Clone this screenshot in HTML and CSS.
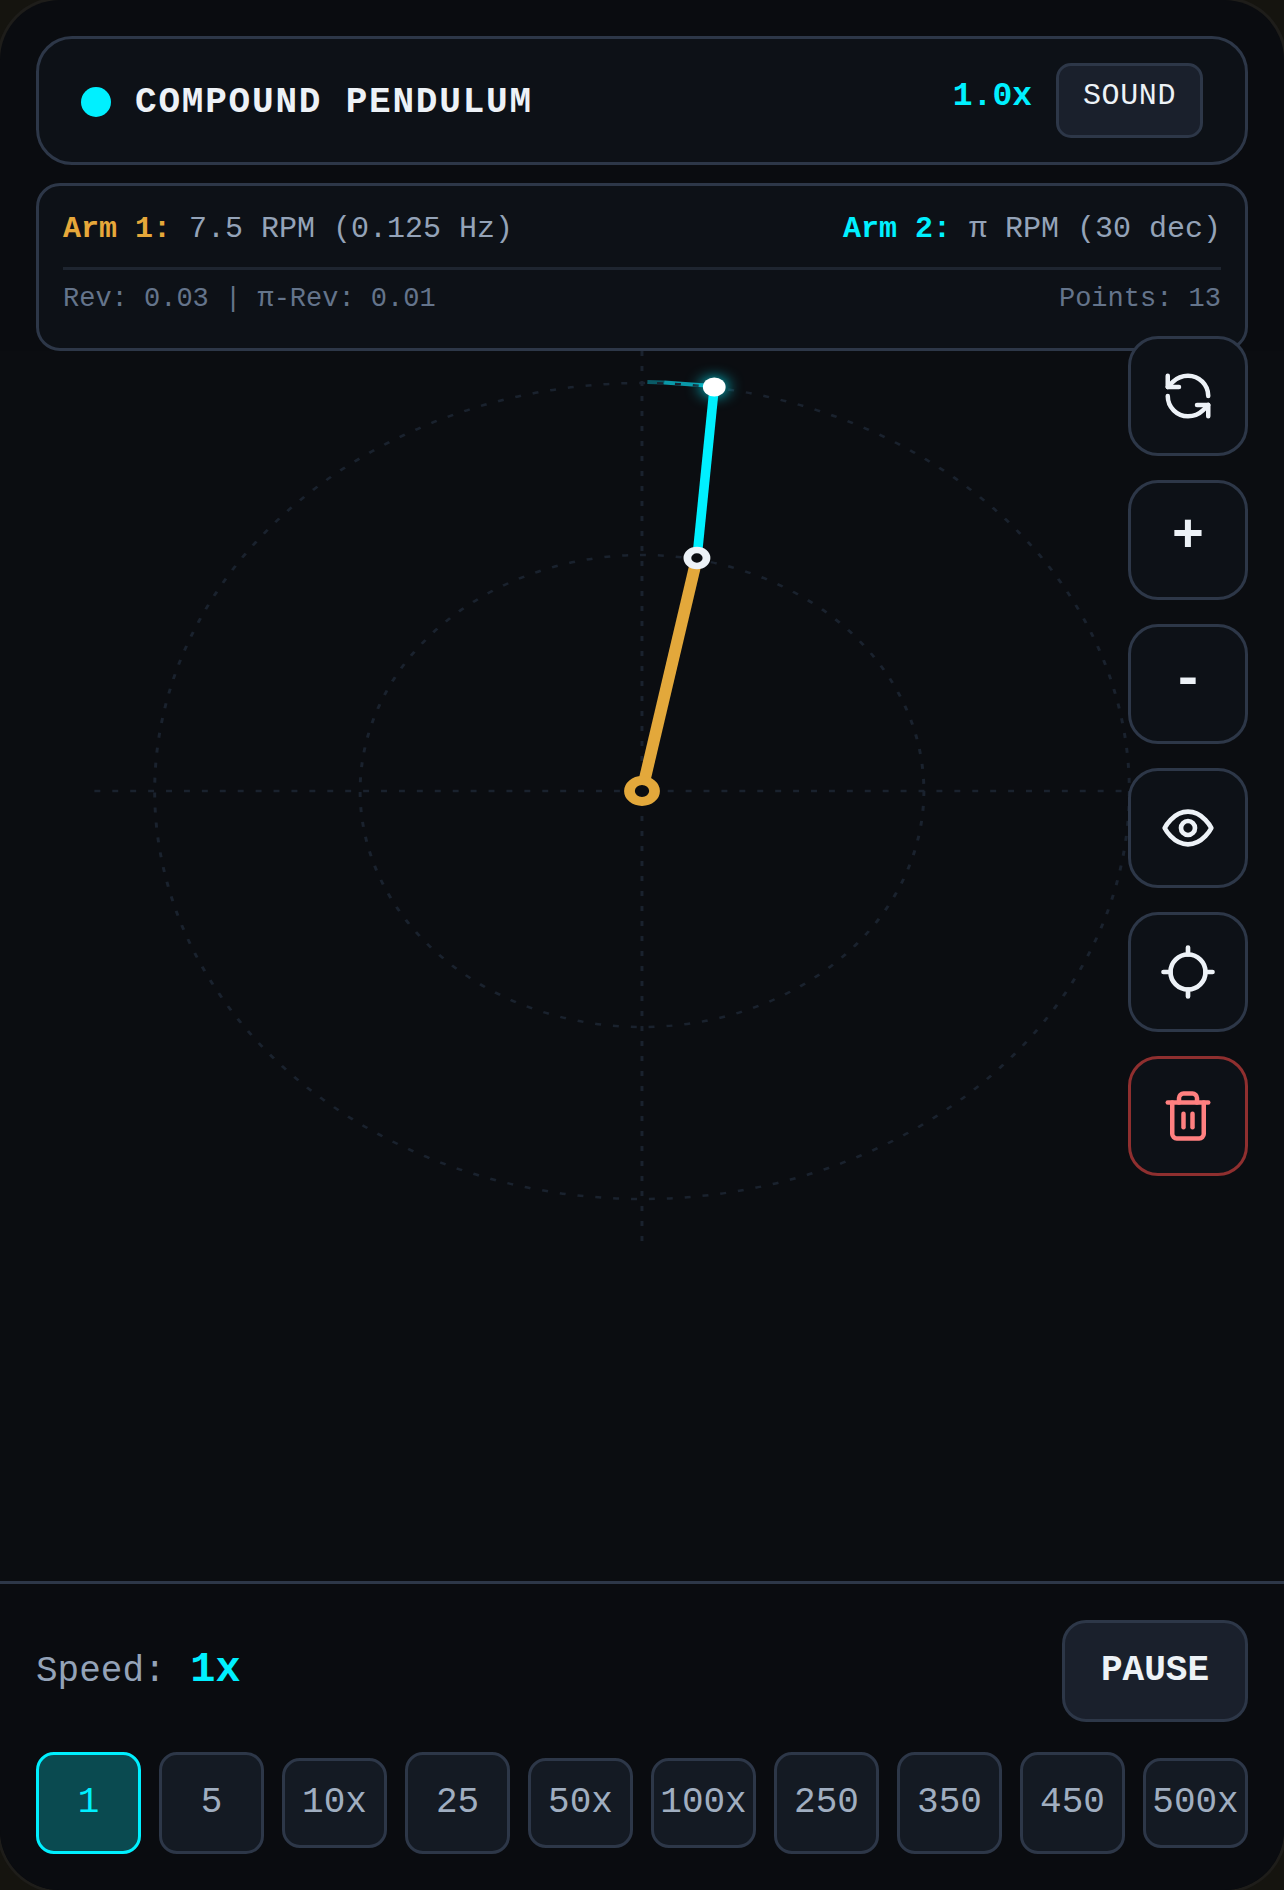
FILE: index.html
```html
<!DOCTYPE html>
<html lang="en">
<head>
  <meta charset="UTF-8" />
  <meta name="viewport" content="width=device-width, initial-scale=1.0"/>
  <title>Compound Pendulum</title>
  <link rel="stylesheet" href="styles.css">
</head>
<body>
  <div class="frame">
    <header class="top-card">
      <div class="title-wrap">
        <span class="dot"></span>
        <h1>COMPOUND PENDULUM</h1>
      </div>
      <div class="top-right">
        <span class="zoom-val">1.0x</span>
        <button class="sound-btn">SOUND</button>
      </div>
    </header>

    <section class="info-card">
      <div class="info-row">
        <span><b class="arm1">Arm 1:</b> 7.5 RPM (0.125 Hz)</span>
        <span><b class="arm2">Arm 2:</b> π RPM (30 dec)</span>
      </div>
      <div class="info-sub">
        <span>Rev: 0.03 | π-Rev: 0.01</span>
        <span>Points: 13</span>
      </div>
    </section>

    <main class="stage">
      <svg class="canvas" viewBox="0 0 1075 1230" preserveAspectRatio="none">
        <path class="trail-old" d="M542 31 L556 31.5"/>
        <path class="trail" d="M556 31.5 L597 35"/>
        <circle class="grid" cx="537.5" cy="440" r="408"/>
        <circle class="grid" cx="537.5" cy="440" r="236"/>
        <line class="grid" x1="79" y1="440" x2="996" y2="440"/>
        <line class="grid" x1="537.5" y1="0" x2="537.5" y2="891"/>
        <line class="arm-gold" x1="537.5" y1="440" x2="583.5" y2="207"/>
        <line class="arm-cyan" x1="583.5" y1="207" x2="598" y2="36"/>
        <circle class="pivot" cx="537.5" cy="440" r="10.5"/>
        <circle class="joint" cx="583.5" cy="207" r="8"/>
        <circle class="tip" cx="598" cy="36" r="9.5"/>
      </svg>
    </main>

    <div class="tools">
      <button class="tool-btn">
        <svg width="54" height="54" viewBox="0 0 24 24"><path d="M21 12a9 9 0 0 0-9-9 9.75 9.75 0 0 0-6.74 2.74L3 8"/><path d="M3 3v5h5"/><path d="M3 12a9 9 0 0 0 9 9 9.75 9.75 0 0 0 6.74-2.74L21 16"/><path d="M16 16h5v5"/></svg>
      </button>
      <button class="tool-btn sign">+</button>
      <button class="tool-btn sign">-</button>
      <button class="tool-btn">
        <svg width="56" height="56" viewBox="0 0 24 24"><path d="M2 12s3.5-7 10-7 10 7 10 7-3.5 7-10 7-10-7-10-7Z"/><circle cx="12" cy="12" r="3"/></svg>
      </button>
      <button class="tool-btn">
        <svg width="56" height="56" viewBox="0 0 24 24"><circle cx="12" cy="12" r="7.5"/><path d="M12 1.5v3M12 19.5v3M1.5 12h3M19.5 12h3"/></svg>
      </button>
      <button class="tool-btn danger">
        <svg width="54" height="54" viewBox="0 0 24 24"><path d="M3 6h18"/><path d="M19 6v14c0 1-1 2-2 2H7c-1 0-2-1-2-2V6"/><path d="M8 6V4c0-1 1-2 2-2h4c1 0 2 1 2 2v2"/><line x1="10" y1="11" x2="10" y2="17"/><line x1="14" y1="11" x2="14" y2="17"/></svg>
      </button>
    </div>

    <footer class="controls">
      <div class="speed-row">
        <div class="speed-label">Speed: <b>1x</b></div>
        <button class="pause-btn">PAUSE</button>
      </div>
      <div class="speed-grid">
        <button class="speed-btn tall active">1</button>
        <button class="speed-btn tall">5</button>
        <button class="speed-btn">10x</button>
        <button class="speed-btn tall">25</button>
        <button class="speed-btn">50x</button>
        <button class="speed-btn">100x</button>
        <button class="speed-btn tall">250</button>
        <button class="speed-btn tall">350</button>
        <button class="speed-btn tall">450</button>
        <button class="speed-btn">500x</button>
      </div>
    </footer>
  </div>
</body>
</html>
```

FILE: styles.css
```css
* {
  box-sizing: border-box;
}

html, body {
  margin: 0;
  height: 100%;
  overflow: hidden;
  background-color: #15140f;
}

body {
  font-family: "Liberation Mono", monospace;
  color: #edf2f7;
}

button {
  font-family: inherit;
  padding: 0;
}

.frame {
  position: relative;
  width: 1284px;
  height: 1890px;
  display: flex;
  flex-direction: column;
  padding-top: 36px;
  background-color: #0a0c10;
  border-radius: 60px;
  box-shadow: 0 0 0 3px #1e1d1a;
  overflow: hidden;
}

.top-card {
  height: 129px;
  margin: 0 36px;
  padding: 0 42px;
  display: flex;
  align-items: center;
  justify-content: space-between;
  background-color: #0d1117;
  border: 3px solid #2d3748;
  border-radius: 36px;
}

.title-wrap {
  display: flex;
  align-items: center;
  gap: 24px;
}

.dot {
  width: 30px;
  height: 30px;
  margin-top: 3px;
  border-radius: 50%;
  background-color: #00f0ff;
}

h1 {
  margin: 0;
  padding-top: 3px;
  font-size: 36px;
  font-weight: bold;
  letter-spacing: 1.8px;
  color: #edf2f7;
}

.top-right {
  display: flex;
  align-items: center;
  gap: 24px;
}

.zoom-val {
  margin-bottom: 9px;
  font-size: 33px;
  font-weight: bold;
  color: #00f0ff;
}

.sound-btn {
  width: 147px;
  height: 75px;
  padding-bottom: 9px;
  font-size: 30px;
  letter-spacing: 0.6px;
  color: #edf2f7;
  background-color: #1a202c;
  border: 3px solid #2d3748;
  border-radius: 15px;
}

.info-card {
  height: 168px;
  margin: 18px 36px 0;
  padding: 0 24px;
  background-color: #0d1117;
  border: 3px solid #2d3748;
  border-radius: 24px;
}

.info-row {
  height: 84px;
  padding-top: 26px;
  display: flex;
  justify-content: space-between;
  font-size: 30px;
  color: #94a3b8;
  border-bottom: 3px solid #1e2530;
}

.info-row b {
  font-weight: bold;
}

.arm1 {
  color: #e6a83a;
}

.arm2 {
  color: #00f0ff;
}

.info-sub {
  padding-top: 14px;
  display: flex;
  justify-content: space-between;
  font-size: 27px;
  color: #64748b;
}

.stage {
  position: relative;
  flex: 1;
  background-color: #0b0d11;
  min-height: 0;
}

.canvas {
  position: absolute;
  top: 0;
  left: 0;
  width: 100%;
  height: 100%;
  display: block;
}

.grid {
  fill: none;
  stroke: #1a222e;
  stroke-width: 2.5;
  stroke-dasharray: 5 10;
}

.trail {
  fill: none;
  stroke: #0a98a8;
  stroke-width: 4;
}

.trail-old {
  fill: none;
  stroke: #0a5a66;
  stroke-width: 4;
}

.arm-gold {
  stroke: #e3a83b;
  stroke-width: 10;
}

.arm-cyan {
  stroke: #00f0ff;
  stroke-width: 8;
}

.pivot {
  fill: #0b0d11;
  stroke: #e3a83b;
  stroke-width: 9;
}

.joint {
  fill: #0b0d11;
  stroke: #edf2f7;
  stroke-width: 6.5;
}

.tip {
  fill: #ffffff;
  filter: drop-shadow(0 0 7px #00f0ff);
}

.tools {
  position: absolute;
  top: 336px;
  right: 36px;
  display: flex;
  flex-direction: column;
  gap: 24px;
}

.tool-btn {
  width: 120px;
  height: 120px;
  display: flex;
  align-items: center;
  justify-content: center;
  color: #edf2f7;
  background-color: #0d1117;
  border: 3px solid #2d3748;
  border-radius: 30px;
}

.tool-btn svg {
  fill: none;
  stroke: currentColor;
  stroke-width: 2;
  stroke-linecap: round;
  stroke-linejoin: round;
}

.sign {
  padding-bottom: 8px;
  font-size: 54px;
  font-weight: bold;
}

.danger {
  color: #ff8080;
  border-color: #8f2f2f;
}

.controls {
  height: 309px;
  padding: 36px 36px 0;
  background-color: #0a0c10;
  border-top: 3px solid #2d3748;
}

.speed-row {
  display: flex;
  align-items: center;
  justify-content: space-between;
}

.speed-label {
  margin-bottom: 2px;
  font-size: 36px;
  color: #94a3b8;
}

.speed-label b {
  margin-left: 3px;
  font-size: 42px;
  font-weight: bold;
  color: #00f0ff;
}

.pause-btn {
  width: 186px;
  height: 102px;
  padding-bottom: 2px;
  font-size: 36px;
  font-weight: bold;
  color: #edf2f7;
  background-color: #1a202c;
  border: 3px solid #2d3748;
  border-radius: 24px;
}

.speed-grid {
  height: 102px;
  margin-top: 30px;
  display: grid;
  grid-template-columns: repeat(10, 1fr);
  gap: 18px;
  align-items: center;
}

.speed-btn {
  height: 90px;
  padding-bottom: 1px;
  font-size: 36px;
  color: #a0aec0;
  background-color: #141a23;
  border: 3px solid #2d3748;
  border-radius: 18px;
}

.tall {
  height: 102px;
}

.active {
  color: #00f0ff;
  background-color: #0a4a50;
  border-color: #00f0ff;
}
```
